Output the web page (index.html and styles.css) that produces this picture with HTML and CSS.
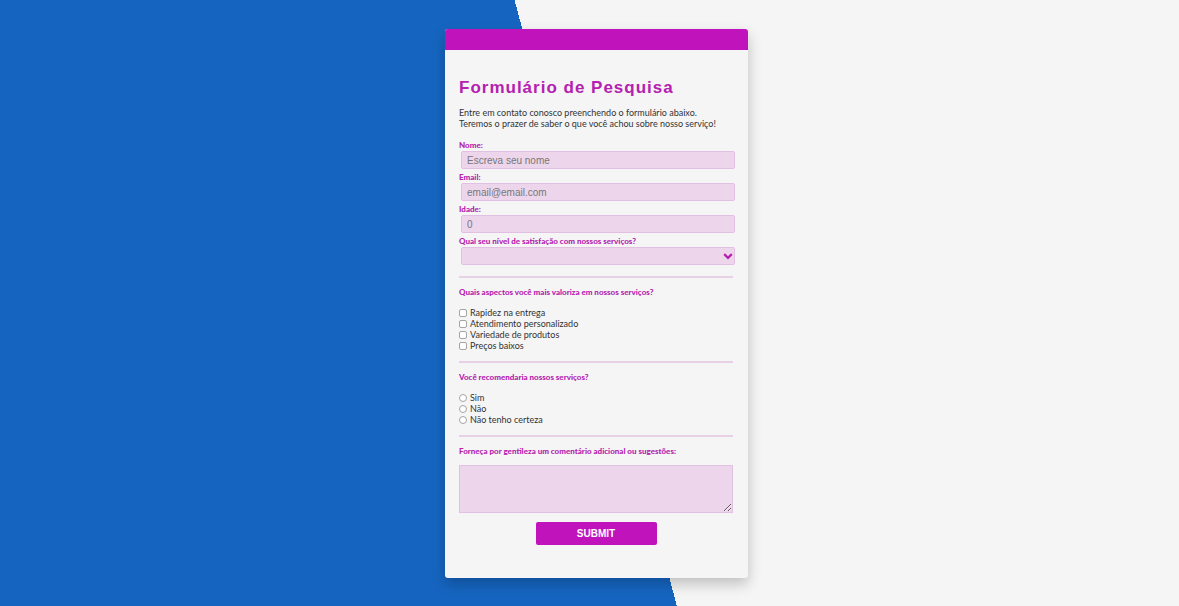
FILE: index.html
```html
<!DOCTYPE html>
<html lang="pt-BR">
<head>
<meta charset="utf-8">
<meta name="viewport" content="width=device-width, initial-scale=1">
<title>Formulário de Pesquisa</title>
<link rel="stylesheet" href="styles.css">
</head>
<body>
<main class="card">
  <div class="card-bar"></div>
  <form class="form">
    <h1 class="title">Formulário de Pesquisa</h1>
    <p class="intro">Entre em contato conosco preenchendo o formulário abaixo.<br>Teremos o prazer de saber o que você achou sobre nosso serviço!</p>

    <div class="fields">
      <div class="field">
        <label class="label" for="name">Nome:</label>
        <input class="control" id="name" type="text" placeholder="Escreva seu nome">
      </div>
      <div class="field">
        <label class="label" for="email">Email:</label>
        <input class="control" id="email" type="email" placeholder="email@email.com">
      </div>
      <div class="field">
        <label class="label" for="age">Idade:</label>
        <input class="control" id="age" type="text" inputmode="numeric" placeholder="0">
      </div>
      <div class="field">
        <label class="label" for="level">Qual seu nível de satisfação com nossos serviços?</label>
        <div class="select-wrap">
          <select class="control" id="level"><option></option></select>
          <svg class="chevron" viewBox="0 0 10 7" aria-hidden="true"><path d="M1.2 1.2 5 4.8 8.8 1.2"/></svg>
        </div>
      </div>
    </div>

    <fieldset class="group">
      <legend class="label">Quais aspectos você mais valoriza em nossos serviços?</legend>
      <label class="option"><input class="tick" type="checkbox">Rapidez na entrega</label>
      <label class="option"><input class="tick" type="checkbox">Atendimento personalizado</label>
      <label class="option"><input class="tick" type="checkbox">Variedade de produtos</label>
      <label class="option"><input class="tick" type="checkbox">Preços baixos</label>
    </fieldset>

    <fieldset class="group">
      <legend class="label">Você recomendaria nossos serviços?</legend>
      <label class="option"><input class="tick tick-round" type="radio" name="recommend">Sim</label>
      <label class="option"><input class="tick tick-round" type="radio" name="recommend">Não</label>
      <label class="option"><input class="tick tick-round" type="radio" name="recommend">Não tenho certeza</label>
    </fieldset>

    <div class="group group-comment">
      <label class="label" for="comment">Forneça por gentileza um comentário adicional ou sugestões:</label>
      <textarea class="comment" id="comment"></textarea>
    </div>

    <button class="submit" type="submit">SUBMIT</button>
  </form>
</main>
</body>
</html>
```

FILE: styles.css
```css
* { box-sizing: border-box; }

body {
  margin: 0;
  min-height: 100vh;
  padding: 29px 0 28px 14px;
  display: grid;
  place-items: center;
  background: linear-gradient(75deg, #1565c0 calc(50% + 6px), #f5f5f5 calc(50% + 6px));
  color: #333;
  font: 9px/11px "Gill Sans", "Gill Sans MT", Lato, sans-serif;
}

.card {
  width: 303px;
  background: #f5f5f5;
  border-radius: 3px;
  box-shadow: 0 6px 14px rgba(0, 0, 0, 0.22);
}

.card-bar {
  height: 21px;
  border-radius: 3px 3px 0 0;
  background: #c013bb;
}

.form {
  padding: 27px 15px 33px 14px;
  display: flex;
  flex-direction: column;
}

.title {
  margin: 0 0 9px;
  color: #b420b0;
  font: bold 17px/21px "Liberation Sans", Arial, sans-serif;
  letter-spacing: 1px;
}

.intro {
  margin: 0 0 11px;
  white-space: nowrap;
}

.fields {
  display: grid;
  gap: 3px;
  padding-bottom: 11px;
}

.field {
  display: grid;
  gap: 1px;
}

.label {
  display: block;
  padding: 0;
  color: #b420b0;
  font-size: 8px;
  font-weight: 900;
  line-height: 10px;
  white-space: nowrap;
}

.control {
  display: block;
  width: 100%;
  height: 18px;
  margin: 0 0 0 2px;
  padding: 0 5px;
  border: 1px solid #e2c0e2;
  border-radius: 2px;
  background: #edd6eb;
  color: #333;
  font: 10px/16px "Liberation Sans", Arial, sans-serif;
  appearance: none;
}

.control::placeholder { color: #777; }

.select-wrap { position: relative; }

.chevron {
  position: absolute;
  top: 6px;
  right: 0;
  width: 10px;
  height: 7px;
  fill: none;
  stroke: #b420b0;
  stroke-width: 2.3;
  pointer-events: none;
}

.group {
  display: flow-root;
  min-width: 0;
  margin: 0;
  padding: 9px 0 10px;
  border: 0;
  border-top: 2px solid #e8d0e6;
}

.group > .label {
  float: left;
  width: 100%;
  margin-bottom: 10px;
}

.group-comment { padding-bottom: 9px; }

.group-comment > .label { margin-bottom: 9px; }

.option {
  clear: both;
  display: flex;
  align-items: center;
  gap: 3px;
}

.tick {
  flex: none;
  width: 8px;
  height: 8px;
  margin: 0;
  border: 1px solid #a5a5a5;
  border-radius: 2px;
  background: #fff;
  appearance: none;
}

.tick:checked { background: #c013bb; }

.tick-round { border-radius: 50%; }

.comment {
  clear: both;
  display: block;
  width: 100%;
  height: 48px;
  margin: 0;
  border: 1px solid #e2c0e2;
  border-radius: 0;
  background: #edd6eb;
  font: inherit;
  resize: both;
}

.submit {
  align-self: center;
  width: 121px;
  height: 23px;
  padding: 0;
  border: 0;
  border-radius: 2px;
  background: #c013bb;
  color: #fff;
  font: bold 10px/23px "Liberation Sans", Arial, sans-serif;
}
```
